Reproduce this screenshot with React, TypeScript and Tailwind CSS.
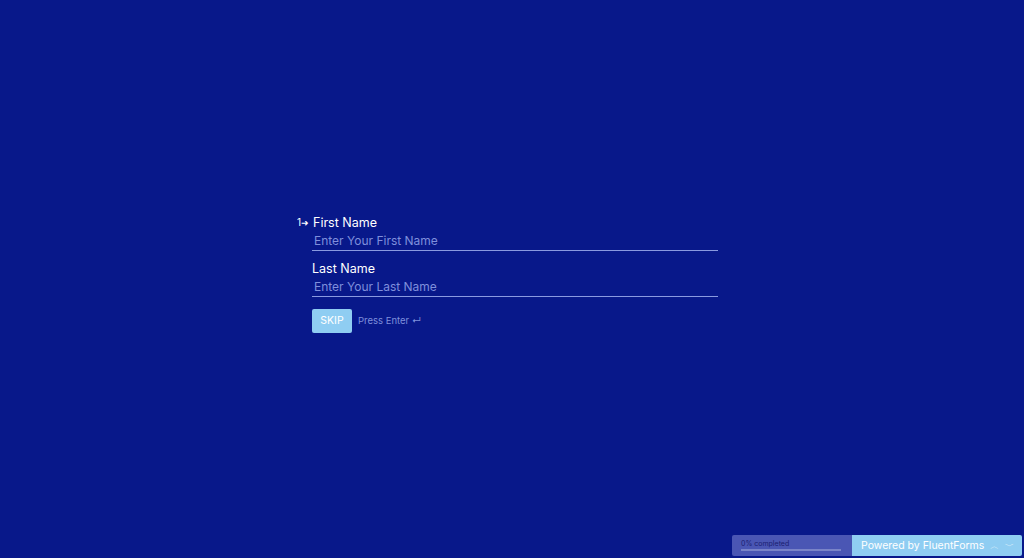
import React from "react";

export default function App() {
  return (
    <div className="w-[1024px] h-[558px] bg-[#08188a] flex flex-col" style={{ fontFamily: "Inter, 'Liberation Sans', sans-serif" }}>
      <div className="flex-1 flex flex-col pt-[215px] pl-[297px]">
        <div className="flex items-center text-white text-[12.5px] leading-[15px]">
          <span className="text-[10px] w-[16px] flex items-center">1<span className="text-[9px]">➜</span></span>
          <span>First Name</span>
        </div>
        <div className="ml-[15px] w-[406px] border-b border-[#8a9ae0] pt-[3px] pb-[2px] pl-[2px] text-[12px] leading-[15px] text-[#7f8fdc]">Enter Your First Name</div>
        <div className="ml-[15px] mt-[10px] text-white text-[12.5px] leading-[15px]">Last Name</div>
        <div className="ml-[15px] w-[406px] border-b border-[#8a9ae0] pt-[3px] pb-[2px] pl-[2px] text-[12px] leading-[15px] text-[#7f8fdc]">Enter Your Last Name</div>
        <div className="ml-[15px] mt-[12px] flex items-center gap-[6px]">
          <div className="w-[40px] h-[24px] bg-[#8fcdf2] rounded-[2px] text-white text-[10.5px] flex items-center justify-center">SKIP</div>
          <span className="text-[9.5px] text-[#7f8fdc]">Press Enter ↵</span>
        </div>
      </div>
      <div className="flex justify-end pr-[2px] pb-[2px]">
        <div className="flex h-[21px] rounded-[2px] overflow-hidden">
          <div className="w-[120px] bg-[#4a56b4] px-[9px] flex flex-col justify-center">
            <span className="text-[7px] text-[#1a2070] leading-none">0% completed</span>
            <div className="mt-[2px] h-[2px] w-[100px] bg-[#7a84c8]" />
          </div>
          <div className="w-[170px] bg-[#8fcdf2] flex items-center pl-[9px] gap-[6px] text-white whitespace-nowrap">
            <span className="text-[10.5px]">Powered by FluentForms</span>
            <span className="text-[9px] text-[#cde8fa]">︿</span>
            <span className="text-[9px]">﹀</span>
          </div>
        </div>
      </div>
    </div>
  );
}
